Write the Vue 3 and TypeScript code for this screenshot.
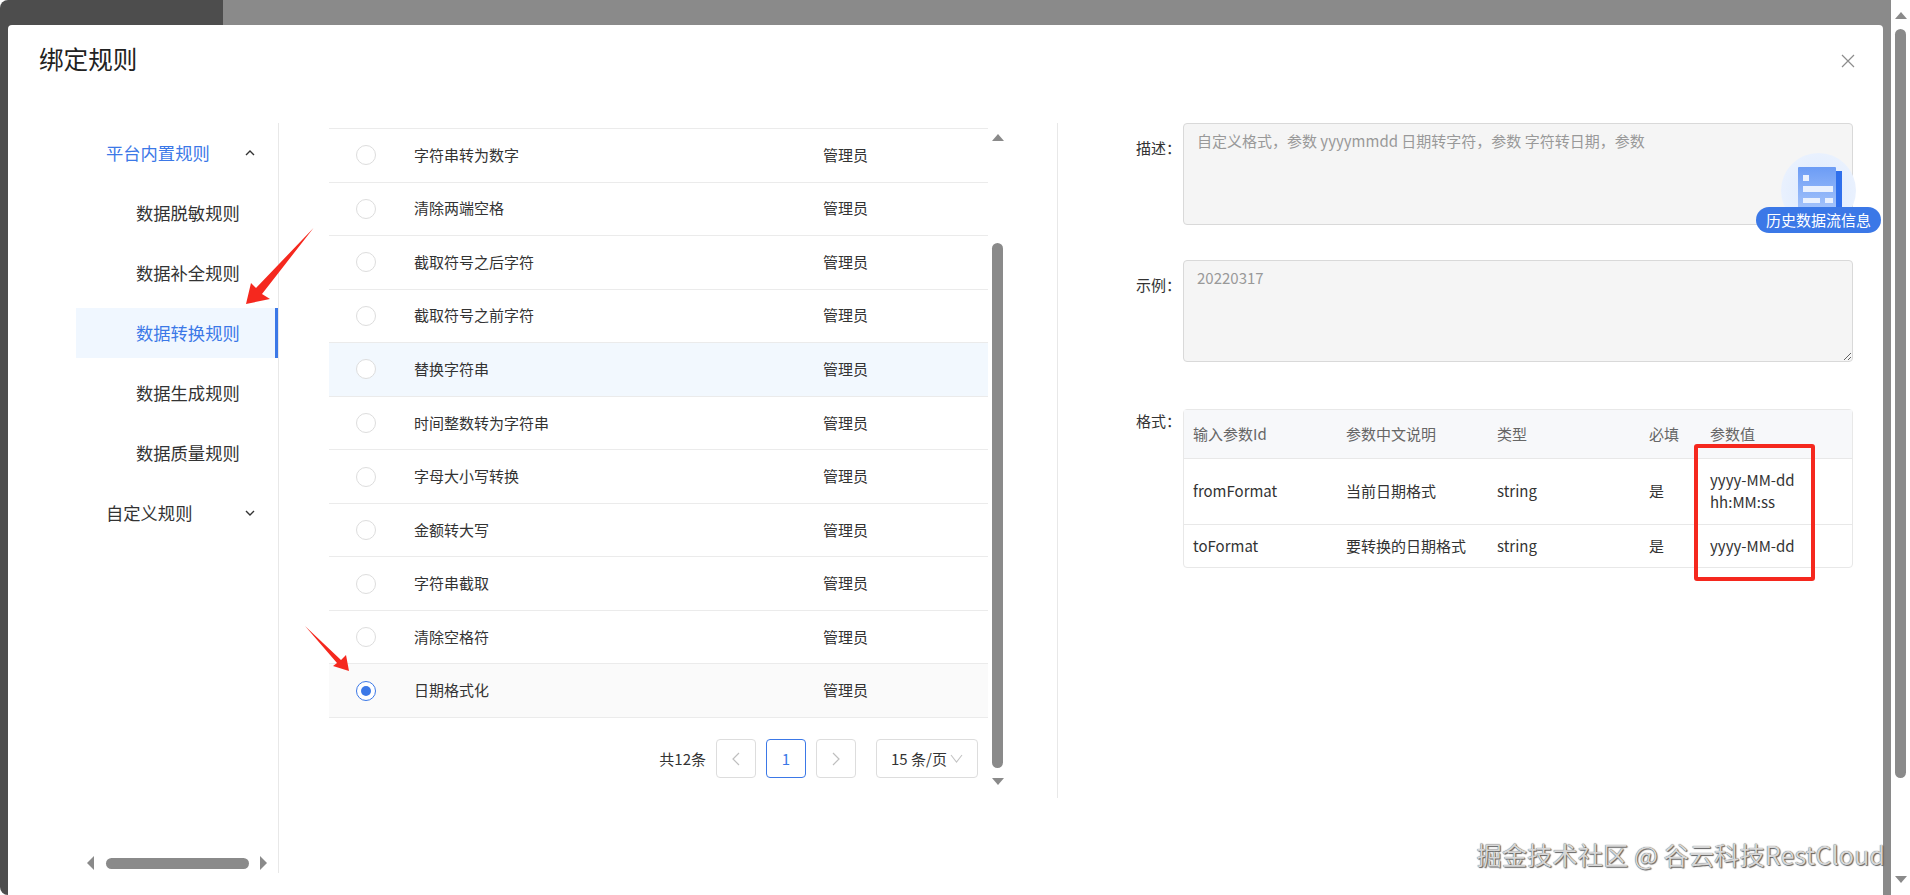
<template>
  <div class="page">
    <div class="mask">
      <div class="modal">
        <div class="modal-header">
          <div class="modal-title">绑定规则</div>
          <svg class="close" width="14" height="14" viewBox="0 0 14 14">
            <path d="M1 1L13 13M13 1L1 13" stroke="#8c8c8c" stroke-width="1.2" fill="none" />
          </svg>
        </div>

        <div class="modal-body">
          <div class="side">
            <div class="side-menu">
              <template v-for="group in groups" :key="group.name">
                <div class="side-group" :class="{ open: group.open }">
                  <span>{{ group.name }}</span>
                  <svg width="12" height="8" viewBox="0 0 12 8">
                    <path :d="group.open ? 'M2 6L6 2L10 6' : 'M2 2L6 6L10 2'" stroke="#333" stroke-width="1.4" fill="none" />
                  </svg>
                </div>
                <div
                  v-for="item in group.items"
                  :key="item"
                  class="side-item"
                  :class="{ active: item === activeMenu }"
                >
                  {{ item }}
                </div>
              </template>
            </div>
            <div class="side-scroll">
              <i class="tri-left"></i>
              <div class="side-thumb"></div>
              <i class="tri-right"></i>
            </div>
          </div>

          <div class="rules">
            <div class="rules-list">
              <div class="rule-table">
                <div
                  v-for="(rule, i) in rules"
                  :key="rule"
                  class="rule-row"
                  :class="{ hovered: i === 4, picked: i === picked }"
                >
                  <div class="radio-cell">
                    <span class="radio" :class="{ checked: i === picked }"></span>
                  </div>
                  <div class="rule-text">{{ rule }}</div>
                  <div class="rule-text">管理员</div>
                </div>
              </div>
              <div class="pager">
                <span class="total">共12条</span>
                <button class="page-btn">
                  <svg width="12" height="16" viewBox="0 0 12 16"><path d="M9 2L3 8L9 14" stroke="#bfbfbf" stroke-width="1.2" fill="none" /></svg>
                </button>
                <button class="page-btn current">1</button>
                <button class="page-btn">
                  <svg width="12" height="16" viewBox="0 0 12 16"><path d="M3 2L9 8L3 14" stroke="#bfbfbf" stroke-width="1.2" fill="none" /></svg>
                </button>
                <div class="page-size">
                  <span>15 条/页</span>
                  <svg width="13" height="9" viewBox="0 0 13 9"><path d="M1 1L6.5 8L12 1" stroke="#c4c4c4" stroke-width="1.1" fill="none" /></svg>
                </div>
              </div>
            </div>
            <div class="rules-scroll">
              <i class="tri-up"></i>
              <div class="rules-thumb"></div>
              <i class="tri-down"></i>
            </div>
          </div>

          <div class="detail">
            <div class="field">
              <label>描述：</label>
              <textarea class="no-resize" readonly :value="description"></textarea>
            </div>
            <div class="field">
              <label>示例：</label>
              <textarea readonly :value="sample"></textarea>
            </div>
            <div class="field format">
              <label>格式：</label>
              <div class="param-wrap">
                <table class="param-table">
                  <colgroup>
                    <col style="width: 153px" />
                    <col style="width: 151px" />
                    <col style="width: 152px" />
                    <col style="width: 61px" />
                    <col />
                  </colgroup>
                  <thead>
                    <tr>
                      <th>输入参数Id</th>
                      <th>参数中文说明</th>
                      <th>类型</th>
                      <th>必填</th>
                      <th>参数值</th>
                    </tr>
                  </thead>
                  <tbody>
                    <tr v-for="p in params" :key="p.id">
                      <td>{{ p.id }}</td>
                      <td>{{ p.desc }}</td>
                      <td>{{ p.type }}</td>
                      <td>{{ p.required }}</td>
                      <td>{{ p.value }}</td>
                    </tr>
                  </tbody>
                </table>
                <div class="red-box"></div>
              </div>
            </div>

            <div class="history">
              <div class="history-bg"></div>
              <svg class="history-icon" width="46" height="46" viewBox="0 0 46 46">
                <defs>
                  <linearGradient id="docFill" x1="0" y1="0" x2="0" y2="1">
                    <stop offset="0" stop-color="#6c9cf5" />
                    <stop offset="1" stop-color="#a8c6fb" />
                  </linearGradient>
                </defs>
                <rect x="37" y="5" width="7" height="41" fill="#2f6fec" />
                <rect x="0" y="1" width="38" height="45" rx="1" fill="url(#docFill)" />
                <rect x="5" y="9" width="6" height="6" fill="#eaf1fe" />
                <rect x="5" y="20" width="30" height="6" fill="#eaf1fe" />
                <rect x="5" y="32" width="17" height="5" fill="#eaf1fe" />
                <rect x="27" y="32" width="8" height="5" fill="#eaf1fe" />
              </svg>
              <div class="history-label">历史数据流信息</div>
            </div>
          </div>
        </div>
      </div>
    </div>

    <div class="page-scroll">
      <i class="tri-up"></i>
      <div class="page-thumb"></div>
      <i class="tri-down"></i>
    </div>

    <svg class="arrows" width="1910" height="895" viewBox="0 0 1910 895">
      <polygon points="313.5,228 262,294 270,299 246,304 251,283 256,288" fill="#f5281e" />
      <polygon points="305,626 341,660 346,655 349,671 333,666 337,663" fill="#f5281e" />
    </svg>

    <div class="watermark">掘金技术社区 @ 谷云科技RestCloud</div>
  </div>
</template>

<script setup lang="ts">
const activeMenu = '数据转换规则';
const picked = 10;

const groups = [
  {
    name: '平台内置规则',
    open: true,
    items: ['数据脱敏规则', '数据补全规则', '数据转换规则', '数据生成规则', '数据质量规则']
  },
  { name: '自定义规则', open: false, items: [] as string[] }
];

const rules = [
  '字符串转为数字',
  '清除两端空格',
  '截取符号之后字符',
  '截取符号之前字符',
  '替换字符串',
  '时间整数转为字符串',
  '字母大小写转换',
  '金额转大写',
  '字符串截取',
  '清除空格符',
  '日期格式化'
];

const description = '自定义格式，参数 yyyymmdd 日期转字符，参数 字符转日期，参数';
const sample = '20220317';

const params = [
  { id: 'fromFormat', desc: '当前日期格式', type: 'string', required: '是', value: 'yyyy-MM-dd hh:MM:ss' },
  { id: 'toFormat', desc: '要转换的日期格式', type: 'string', required: '是', value: 'yyyy-MM-dd' }
];
</script>

<style>
html, body {
  margin: 0;
  background: #fff;
  overflow: hidden;
}
</style>

<style scoped>
.page {
  position: relative;
  display: flex;
  width: 1910px;
  height: 895px;
  overflow: hidden;
  font-family: "Noto Sans CJK SC", "Noto Sans", sans-serif;
  font-size: 15px;
  color: #333;
}
.mask {
  width: 1891px;
  height: 895px;
  box-sizing: border-box;
  padding: 25px 8px 0;
  border-radius: 8px 0 0 8px;
  background: linear-gradient(to right, #4d4d4d 223px, #8a8a8a 223px);
}
.modal {
  display: flex;
  flex-direction: column;
  height: 870px;
  background: #fff;
  border-radius: 4px 4px 0 0;
}
.modal-header {
  display: flex;
  justify-content: space-between;
  align-items: center;
  flex: none;
  height: 68px;
  margin-bottom: 30px;
  padding: 0 28px 0 31px;
}
.modal-title {
  font-size: 24.6px;
  line-height: 34px;
  margin-top: -2px;
  color: #222;
}
.close {
  margin-top: 4px;
}
.modal-body {
  display: flex;
  height: 750px;
}

.side {
  display: flex;
  flex-direction: column;
  justify-content: space-between;
  flex: none;
  width: 271px;
  height: 750px;
  box-sizing: border-box;
  padding: 5px 0 4px 68px;
  border-right: 1px solid #e8e8e8;
}
.side-menu {
  display: flex;
  flex-direction: column;
  gap: 10px;
  width: 202px;
  font-size: 17.3px;
}
.side-group,
.side-item {
  display: flex;
  align-items: center;
  height: 50px;
  box-sizing: border-box;
}
.side-group {
  justify-content: space-between;
  padding: 0 22px 0 30px;
}
.side-group span {
  margin-top: -2px;
}
.side-group.open {
  color: #3b78e7;
}
.side-item {
  padding: 0 0 2px 60px;
}
.side-item.active {
  color: #3b78e7;
  background: #f0f7ff;
  border-right: 3px solid #3b78e7;
}
.side-scroll {
  display: flex;
  align-items: center;
  height: 12px;
  margin-left: 11px;
  width: 180px;
  justify-content: space-between;
}
.side-thumb {
  width: 143px;
  height: 11px;
  border-radius: 6px;
  background: #8a8a8a;
}
.tri-left,
.tri-right {
  width: 0;
  height: 0;
  border-top: 7px solid transparent;
  border-bottom: 7px solid transparent;
}
.tri-left {
  border-right: 7px solid #8a8a8a;
}
.tri-right {
  border-left: 7px solid #8a8a8a;
}
.tri-up,
.tri-down {
  display: block;
  flex: none;
  width: 0;
  height: 0;
  border-left: 6.5px solid transparent;
  border-right: 6.5px solid transparent;
}
.tri-up {
  border-bottom: 7px solid #8a8a8a;
}
.tri-down {
  border-top: 7px solid #8a8a8a;
}

.rules {
  display: flex;
  flex: none;
  width: 779px;
  height: 675px;
  box-sizing: border-box;
  padding: 5px 0 0 50px;
  border-right: 1px solid #e8e8e8;
}
.rules-list {
  width: 659px;
  flex: none;
}
.rule-table {
  border-top: 1px solid #ebebeb;
}
.rule-row {
  display: grid;
  grid-template-columns: 85px 409px 1fr;
  align-items: center;
  height: 53.55px;
  box-sizing: border-box;
  border-bottom: 1px solid #ebebeb;
}
.rule-text {
  margin-top: -2px;
}
.rule-row.hovered {
  background: #f2f8fe;
}
.rule-row.picked {
  background: #fafafa;
}
.radio-cell {
  display: flex;
  padding-left: 27px;
}
.radio {
  display: flex;
  align-items: center;
  justify-content: center;
  width: 20px;
  height: 20px;
  box-sizing: border-box;
  border: 1px solid #ddd;
  border-radius: 50%;
  background: #fff;
}
.radio.checked {
  border-color: #3b78e7;
}
.radio.checked::after {
  content: "";
  width: 10px;
  height: 10px;
  border-radius: 50%;
  background: #3b78e7;
}
.pager {
  display: flex;
  align-items: center;
  justify-content: flex-end;
  gap: 10px;
  margin-top: 21px;
  padding-right: 10px;
}
.page-btn {
  display: flex;
  align-items: center;
  justify-content: center;
  width: 40px;
  height: 39px;
  padding: 0;
  box-sizing: border-box;
  border: 1px solid #ddd;
  border-radius: 4px;
  background: #fff;
  font-family: inherit;
  font-size: 15px;
}
.page-btn.current {
  border-color: #3b78e7;
  color: #3b78e7;
}
.page-size {
  display: flex;
  align-items: center;
  gap: 3px;
  width: 102px;
  height: 39px;
  box-sizing: border-box;
  margin-left: 10px;
  padding-left: 14px;
  border: 1px solid #ddd;
  border-radius: 4px;
}
.rules-scroll {
  display: flex;
  flex-direction: column;
  align-items: center;
  width: 13px;
  margin-left: 3px;
  padding-top: 6px;
}
.rules-thumb {
  width: 11px;
  height: 525px;
  margin: 102px 0 10px;
  border-radius: 6px;
  background: #8a8a8a;
}

.detail {
  position: relative;
  flex: 1;
  padding: 0 30px 0 78px;
}
.field {
  display: flex;
  margin-bottom: 35px;
}
.field.format {
  margin-top: 47px;
}
.field label {
  flex: none;
  width: 47px;
  margin-top: 14px;
  line-height: 22px;
}
.field.format label {
  margin-top: 1px;
}
textarea {
  flex: 1;
  display: block;
  height: 102px;
  box-sizing: border-box;
  padding: 6px 13px;
  border: 1px solid #d9d9d9;
  border-radius: 4px;
  outline: none;
  background: #f5f5f5;
  color: #999;
  font-family: inherit;
  font-size: 15px;
  line-height: 22px;
}
textarea.no-resize {
  resize: none;
}
.param-wrap {
  position: relative;
  flex: 1;
}
.param-table {
  width: 100%;
  table-layout: fixed;
  border-collapse: separate;
  border-spacing: 0;
  border: 1px solid #e8e8e8;
  border-radius: 4px;
  line-height: 22px;
}
.param-table th,
.param-table td {
  padding: 0 20px 0 9px;
  text-align: left;
  font-weight: 400;
}
.param-table th {
  height: 48px;
  box-sizing: border-box;
  background: #f7f8fa;
  color: #666;
}
.param-table td {
  border-top: 1px solid #e8e8e8;
}
.param-table tbody tr:first-child td {
  height: 64px;
  padding-bottom: 1px;
}
.param-table tbody tr:last-child td {
  height: 42px;
}
.red-box {
  position: absolute;
  left: 511px;
  top: 35px;
  width: 121px;
  height: 137px;
  box-sizing: border-box;
  border: 4px solid #f5281e;
  border-radius: 3px;
}

.history {
  position: absolute;
  left: 698px;
  top: 27px;
  width: 125px;
  height: 83px;
}
.history-bg {
  position: absolute;
  left: 25px;
  top: 3px;
  width: 75px;
  height: 75px;
  border-radius: 50%;
  background: radial-gradient(circle, #dde9fd 0%, #e9f1fe 70%, #f0f6ff 100%);
}
.history-icon {
  position: absolute;
  left: 42px;
  top: 16px;
}
.history-label {
  position: absolute;
  left: 0;
  bottom: 0;
  width: 125px;
  height: 26px;
  border-radius: 13px;
  background: #3b78e7;
  color: #fff;
  font-size: 15px;
  line-height: 26px;
  text-align: center;
}

.page-scroll {
  display: flex;
  flex-direction: column;
  align-items: center;
  width: 19px;
  padding-top: 12px;
  box-sizing: border-box;
}
.page-thumb {
  width: 11px;
  height: 749px;
  margin: 10px 0 98px;
  border-radius: 6px;
  background: #8a8a8a;
}

.arrows {
  position: absolute;
  left: 0;
  top: 0;
  pointer-events: none;
}
.watermark {
  position: absolute;
  right: 25px;
  top: 837px;
  font-size: 25.3px;
  line-height: 34px;
  color: #d6d6d6;
  text-shadow: 0 0 1px #444, 1px 1px 1px #666;
  white-space: nowrap;
}
</style>
